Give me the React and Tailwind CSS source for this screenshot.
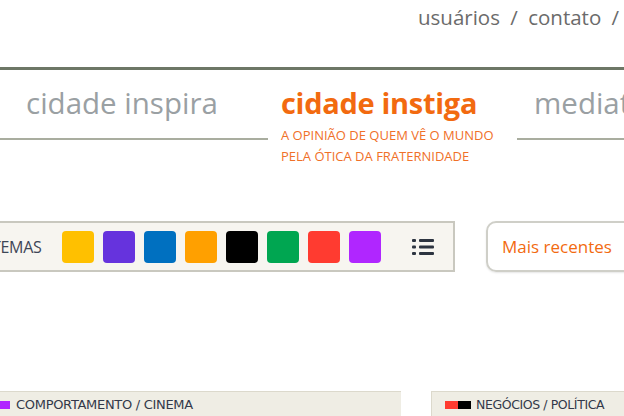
import React from 'react';

const swatches = ['#ffc000', '#6633dd', '#0070c0', '#ffa000', '#000000', '#00a651', '#ff3b30', '#b026ff'];

function ListIcon() {
  return (
    <svg width="22" height="16" viewBox="0 0 22 16">
      <rect x="0" y="0" width="4" height="3" rx="1" fill="#2d3440" />
      <rect x="0" y="6.5" width="4" height="3" rx="1" fill="#2d3440" />
      <rect x="0" y="13" width="4" height="3" rx="1" fill="#2d3440" />
      <rect x="7" y="0" width="15" height="3" rx="1" fill="#2d3440" />
      <rect x="7" y="6.5" width="15" height="3" rx="1" fill="#2d3440" />
      <rect x="7" y="13" width="15" height="3" rx="1" fill="#2d3440" />
    </svg>
  );
}

export default function App() {
  return (
    <div className="w-[624px] h-[416px] overflow-hidden bg-white font-['Open_Sans',sans-serif]">
      {/* Top links */}
      <div className="h-[67px] pl-[418px] pt-[3px] whitespace-nowrap text-[20.5px] leading-[28px] text-[#6b6b6b]">
        usuários <span className="mx-[5px]">/</span> contato <span className="ml-[5px]">/</span>
      </div>

      {/* Sections */}
      <div className="border-t-[3px] border-[#6d7766] flex items-start">
        <div className="shrink-0 w-[268px] h-[70px] border-b-2 border-[#a9ad9f] pl-[26px] pt-[16px]">
          <span className="text-[29.5px] leading-[34px] text-[#9aa0a3] whitespace-nowrap">cidade inspira</span>
        </div>
        <div className="shrink-0 ml-[13px] w-[236px] pt-[16px]">
          <div className="text-[29px] leading-[34px] font-bold text-[#f26a10] whitespace-nowrap tracking-[-0.3px]">cidade instiga</div>
          <div className="mt-[5px] text-[13px] leading-[21px] text-[#f07028] uppercase whitespace-nowrap">
            A opinião de quem vê o mundo
            <br />
            pela ótica da fraternidade
          </div>
        </div>
        <div className="flex-1 h-[70px] border-b-2 border-[#a9ad9f] pl-[17px] pt-[16px] overflow-hidden">
          <span className="text-[29.5px] leading-[34px] text-[#9aa0a3] whitespace-nowrap">mediateca</span>
        </div>
      </div>

      {/* Filter bar */}
      <div className="mt-[54px] flex items-start">
        <div className="shrink-0 -ml-[30px] w-[485px] h-[51px] border-2 border-[#c9c8bf] bg-[#f7f5f0] flex items-center">
          <span className="ml-[20px] text-[16px] text-[#3e4656] tracking-[-0.3px]">TEMAS</span>
          <div className="ml-[20px] flex gap-[9px]">
            {swatches.map((c) => (
              <div key={c} className="w-[32px] h-[32px] rounded-[4px]" style={{ backgroundColor: c }} />
            ))}
          </div>
          <div className="ml-[31px]">
            <ListIcon />
          </div>
        </div>
        <div className="shrink-0 ml-[31px] w-[180px] h-[51px] rounded-[10px] border-2 border-[#cfcfc8] shadow-[0_1px_2px_rgba(0,0,0,0.1)] flex items-center pl-[14px]">
          <span className="text-[17px] text-[#f26a10] whitespace-nowrap">Mais recentes</span>
        </div>
      </div>

      {/* Cards */}
      <div className="mt-[119px] flex gap-[30px]">
        <div className="shrink-0 -ml-[10px] w-[411px] h-[30px] bg-[#efede4] border-t border-[#dcd9cc] flex items-start pt-[5px] pl-[10px]">
          <span className="mt-[4px] w-[10px] h-[8px] bg-[#b026ff]" />
          <span className="ml-[6px] text-[13px] leading-[16px] text-[#33394a] font-['DejaVu_Sans',sans-serif] tracking-[-0.3px]">COMPORTAMENTO / CINEMA</span>
        </div>
        <div className="shrink-0 w-[200px] h-[30px] bg-[#efede4] border-t border-l border-[#dcd9cc] flex items-start pt-[5px] pl-[13px]">
          <span className="mt-[4px] w-[13px] h-[8px] bg-[#ff3b30]" />
          <span className="mt-[4px] w-[13px] h-[8px] bg-black" />
          <span className="ml-[5px] text-[12.5px] leading-[16px] text-[#33394a] font-['DejaVu_Sans',sans-serif] tracking-[-0.4px] whitespace-nowrap">NEGÓCIOS / POLÍTICA</span>
        </div>
      </div>
    </div>
  );
}
